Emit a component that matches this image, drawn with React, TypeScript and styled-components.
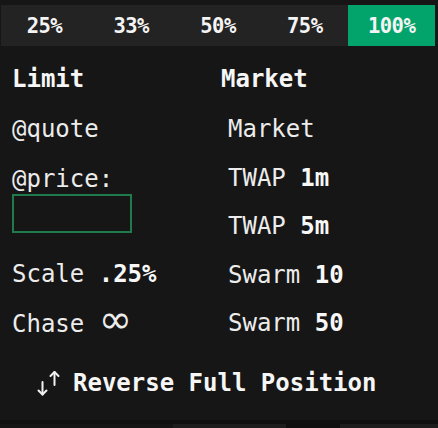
import React from "react";
import styled, { createGlobalStyle } from "styled-components";

const GlobalStyle = createGlobalStyle`
  html, body { margin: 0; padding: 0; background: #161616; }
  * { box-sizing: border-box; }
`;

const Page = styled.div`
  width: 438px;
  height: 428px;
  background: #161616;
  color: #ececec;
  font-family: "DejaVu Sans Mono", "Liberation Mono", monospace;
  font-size: 24px;
  padding-top: 5px;
  overflow: hidden;
  display: flex;
  flex-direction: column;
`;

const PctBar = styled.div`
  margin-left: 1px;
  width: 434px;
  height: 41px;
  background: #232323;
  display: grid;
  grid-template-columns: repeat(5, 1fr);
`;

const PctButton = styled.div<{ $active?: boolean }>`
  display: flex;
  align-items: center;
  justify-content: center;
  font-size: 20.5px;
  font-weight: 700;
  letter-spacing: -0.5px;
  color: #f4f4f4;
  background: ${(p) => (p.$active ? "#02a46b" : "transparent")};
`;

const Columns = styled.div`
  margin-top: 19px;
  padding-left: 12px;
  display: grid;
  grid-template-columns: 209px 1fr;
`;

const Column = styled.div<{ $gap: number }>`
  display: flex;
  flex-direction: column;
  gap: ${(p) => p.$gap}px;
`;

const Header = styled.div<{ $spaced?: boolean }>`
  font-weight: 700;
  line-height: 28px;
  color: #f6f6f6;
  margin-bottom: ${(p) => (p.$spaced ? 22 : 0)}px;
`;

const Item = styled.div`
  line-height: 28px;
  white-space: pre;
  display: flex;
  align-items: center;
`;

const Strong = styled.b`
  font-weight: 700;
  color: #f8f8f8;
`;

const PriceField = styled.div`
  display: flex;
  flex-direction: column;
  gap: 1px;
  margin-bottom: 5px;
`;

const PriceInput = styled.div`
  width: 120px;
  height: 39px;
  border: 2px solid #1f7b4c;
`;

const InfinityGlyph = styled.span`
  font-family: "DejaVu Sans", sans-serif;
  font-size: 40px;
  line-height: 28px;
  display: inline-block;
  transform: translateY(-5px);
`;

const MarketList = styled.div`
  display: flex;
  flex-direction: column;
  gap: 20.5px;
  padding-left: 7px;
`;

const ReverseRow = styled.div`
  margin-top: 31px;
  padding-left: 37px;
  display: flex;
  align-items: center;
  gap: 12px;
  font-weight: 700;
  line-height: 28px;
  color: #f6f6f6;
`;

const Footer = styled.div`
  margin-top: auto;
  height: 8px;
  background: #0f0f0f;
  padding-top: 4px;
  display: grid;
  grid-template-columns: 173px 113px 54px 1fr;
`;

const FooterBlock = styled.div<{ $tone: string }>`
  background: ${(p) => p.$tone};
`;

const ReverseIcon = () => (
  <svg width="24" height="26" viewBox="0 0 24 26" fill="none" stroke="#f2f2f2" strokeWidth="2" strokeLinecap="round" strokeLinejoin="round">
    <path d="M5.5 12 V24.5" />
    <path d="M1.5 20.5 L5.5 24.5 L9.5 20.5" />
    <path d="M17.5 2 V15" />
    <path d="M13.5 6 L17.5 2 L21.5 6" />
  </svg>
);

const pcts = ["25%", "33%", "50%", "75%", "100%"];

export default function App() {
  return (
    <>
      <GlobalStyle />
      <Page>
        <PctBar>
          {pcts.map((p) => (
            <PctButton key={p} $active={p === "100%"}>
              {p}
            </PctButton>
          ))}
        </PctBar>
        <Columns>
          <Column $gap={22}>
            <Header>Limit</Header>
            <Item>@quote</Item>
            <PriceField>
              <Item>@price:</Item>
              <PriceInput />
            </PriceField>
            <Item>
              {"Scale "}
              <Strong>.25%</Strong>
            </Item>
            <Item>
              {"Chase "}
              <InfinityGlyph>∞</InfinityGlyph>
            </Item>
          </Column>
          <Column $gap={0}>
            <Header $spaced>Market</Header>
            <MarketList>
              <Item>Market</Item>
              <Item>
                {"TWAP "}
                <Strong>1m</Strong>
              </Item>
              <Item>
                {"TWAP "}
                <Strong>5m</Strong>
              </Item>
              <Item>
                {"Swarm "}
                <Strong>10</Strong>
              </Item>
              <Item>
                {"Swarm "}
                <Strong>50</Strong>
              </Item>
            </MarketList>
          </Column>
        </Columns>
        <ReverseRow>
          <ReverseIcon />
          <span>Reverse Full Position</span>
        </ReverseRow>
        <Footer>
          <FooterBlock $tone="#141414" />
          <FooterBlock $tone="#1d1d1d" />
          <FooterBlock $tone="#0f0f0f" />
          <FooterBlock $tone="#1d1d1d" />
        </Footer>
      </Page>
    </>
  );
}
